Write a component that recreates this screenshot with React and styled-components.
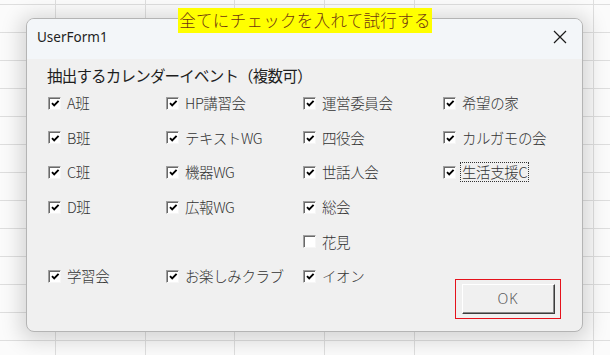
import React from "react";
import styled, { createGlobalStyle } from "styled-components";

const Global = createGlobalStyle`
  html, body { margin: 0; padding: 0; }
  body {
    width: 610px;
    height: 355px;
    overflow: hidden;
    background-color: #fbfbfb;
    background-image:
      repeating-linear-gradient(to right, transparent 0, transparent 55px, #dedede 55px, #dedede 56px, transparent 56px, transparent 89.7px),
      repeating-linear-gradient(to bottom, transparent 0, transparent 4px, #dedede 4px, #dedede 5px, transparent 5px, transparent 28px);
    font-family: "Noto Sans CJK JP", "Noto Sans", sans-serif;
  }
`;

const Page = styled.div`
  position: relative;
  width: 610px;
  height: 355px;
  box-sizing: border-box;
  padding: 18px 0 0 26px;
`;

const Callout = styled.div`
  position: absolute;
  left: 178px;
  top: 8px;
  width: 254px;
  height: 25px;
  background: #ffff00;
  color: #6e3410;
  font-family: "Noto Sans CJK JP", sans-serif;
  font-weight: 300;
  font-size: 16.5px;
  line-height: 25px;
  text-align: center;
  letter-spacing: 0.3px;
  z-index: 2;
`;

const Window = styled.div`
  width: 557px;
  height: 314px;
  box-sizing: border-box;
  border: 1px solid #b4b4b4;
  border-radius: 8px;
  overflow: hidden;
  background: #f0f0f0;
  box-shadow: 0 3px 20px 6px rgba(0, 0, 0, 0.15);
  display: flex;
  flex-direction: column;
`;

const TitleBar = styled.div`
  height: 40px;
  box-sizing: border-box;
  padding: 0 14px 4px 10px;
  background: #f3f6f9;
  display: flex;
  align-items: center;
  justify-content: space-between;
  flex-shrink: 0;
`;

const Title = styled.span`
  font-family: "Noto Sans", "Open Sans", sans-serif;
  font-size: 13.5px;
  color: #1f1f1f;
`;

const CloseIcon = () => (
  <svg width="16" height="16" viewBox="0 0 16 16">
    <path d="M2 2 L14 14 M14 2 L2 14" stroke="#1a1a1a" strokeWidth="1.2" fill="none" />
  </svg>
);

const Body = styled.div`
  padding: 5px 20px 0 21px;
  display: flex;
  flex-direction: column;
`;

const Heading = styled.div`
  height: 22px;
  line-height: 22px;
  font-family: "Noto Sans CJK JP", sans-serif;
  font-size: 15.5px;
  color: #1e1e1e;
  letter-spacing: -0.8px;
  margin-left: -1px;
`;

const Grid = styled.div`
  display: grid;
  grid-template-columns: 118px 137px 140px 1fr;
  grid-template-rows: repeat(6, 34.6px);
`;

const Item = styled.label`
  display: flex;
  align-items: center;
  gap: 6px;
  grid-column: ${(p) => p.col};
  grid-row: ${(p) => p.row};
  font-family: "Noto Sans CJK JP", sans-serif;
  font-weight: 300;
  font-size: 14.5px;
  color: #333333;
  letter-spacing: -0.4px;
  white-space: nowrap;
`;

const Box = styled.span`
  width: 13px;
  height: 13px;
  box-sizing: border-box;
  flex-shrink: 0;
  background: #ffffff;
  border: 1px solid;
  border-color: #a0a0a0 #f6f6f6 #f6f6f6 #a0a0a0;
  box-shadow: inset 1px 1px 0 #696969;
  display: flex;
  align-items: center;
  justify-content: center;
`;

const Text = styled.span`
  border: 1px ${(p) => (p.focused ? "dotted #333" : "solid transparent")};
  padding: 0 1px;
  line-height: 18px;
  margin-left: -2px;
`;

const Check = () => (
  <svg width="9" height="9" viewBox="0 0 9 9" style={{ marginLeft: 1, marginTop: 1 }}>
    <path d="M1 4.2 L3.2 6.4 L7.6 1.8" stroke="#000" strokeWidth="1.9" fill="none" />
  </svg>
);

const OkCell = styled.div`
  grid-column: 4;
  grid-row: 6;
  align-self: start;
  justify-self: start;
  margin: 20px 0 0 12px;
  border: 1.5px solid #e5121c;
  padding: 4px 5.5px 4.5px 5.5px;
  display: flex;
`;

const OkButton = styled.button`
  width: 93px;
  height: 30px;
  box-sizing: border-box;
  background: #f0f0f0;
  border: 1px solid;
  border-color: #ffffff #3c3c3c #3c3c3c #ffffff;
  box-shadow: inset -1px -1px 0 #8a8a8a;
  font-family: "Noto Sans", "Liberation Sans", sans-serif;
  font-weight: 300;
  font-size: 14px;
  color: #5a5a5a;
  letter-spacing: 1px;
  padding: 0;
`;

const items = [
  { col: 1, row: 1, label: "A班" },
  { col: 1, row: 2, label: "B班" },
  { col: 1, row: 3, label: "C班" },
  { col: 1, row: 4, label: "D班" },
  { col: 1, row: 6, label: "学習会" },
  { col: 2, row: 1, label: "HP講習会" },
  { col: 2, row: 2, label: "テキストWG" },
  { col: 2, row: 3, label: "機器WG" },
  { col: 2, row: 4, label: "広報WG" },
  { col: 2, row: 6, label: "お楽しみクラブ" },
  { col: 3, row: 1, label: "運営委員会" },
  { col: 3, row: 2, label: "四役会" },
  { col: 3, row: 3, label: "世話人会" },
  { col: 3, row: 4, label: "総会" },
  { col: 3, row: 5, label: "花見", unchecked: true },
  { col: 3, row: 6, label: "イオン" },
  { col: 4, row: 1, label: "希望の家" },
  { col: 4, row: 2, label: "カルガモの会" },
  { col: 4, row: 3, label: "生活支援C", focused: true },
];

export default function App() {
  return (
    <>
      <Global />
      <Page>
        <Callout>全てにチェックを入れて試行する</Callout>
        <Window>
          <TitleBar>
            <Title>UserForm1</Title>
            <CloseIcon />
          </TitleBar>
          <Body>
            <Heading>抽出するカレンダーイベント（複数可）</Heading>
            <Grid>
              {items.map((it) => (
                <Item key={it.label} col={it.col} row={it.row}>
                  <Box>{!it.unchecked && <Check />}</Box>
                  <Text focused={it.focused}>{it.label}</Text>
                </Item>
              ))}
              <OkCell>
                <OkButton>OK</OkButton>
              </OkCell>
            </Grid>
          </Body>
        </Window>
      </Page>
    </>
  );
}
